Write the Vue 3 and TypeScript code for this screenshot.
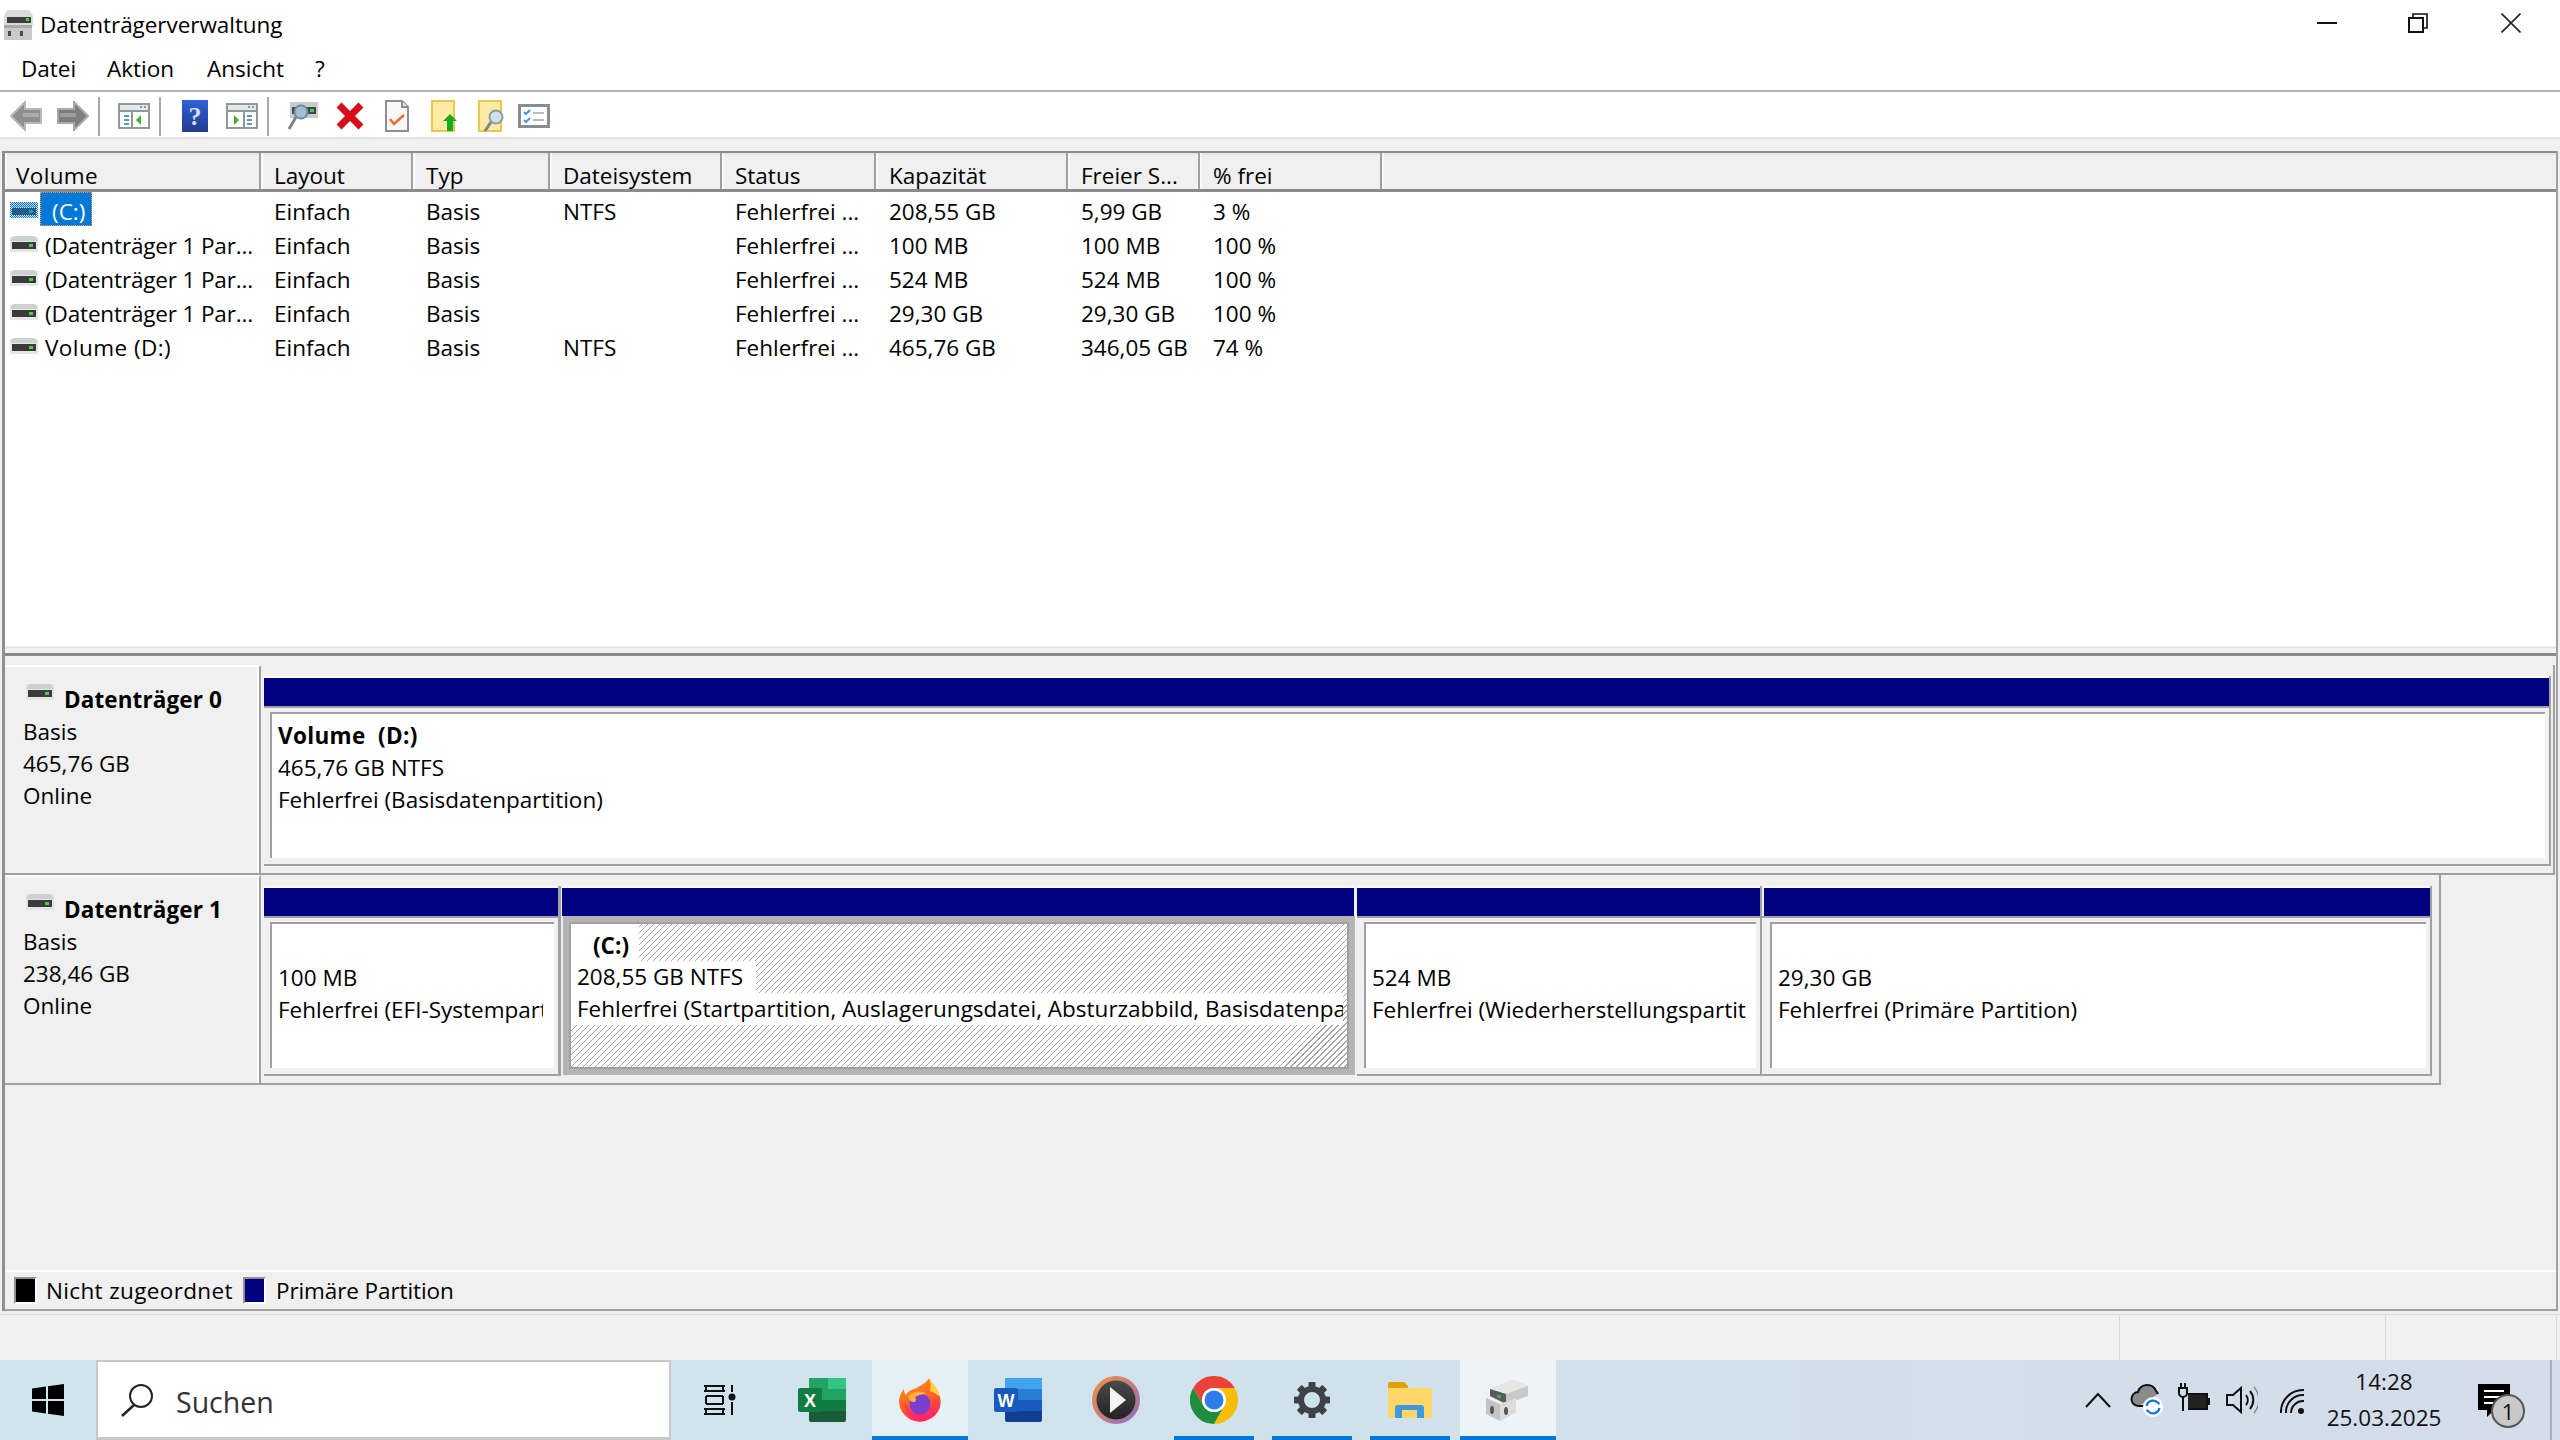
<script setup lang="ts">
interface Row { name: string; layout: string; typ: string; fs: string; status: string; cap: string; free: string; pct: string; sel?: boolean }

const columns: string[] = ['Volume', 'Layout', 'Typ', 'Dateisystem', 'Status', 'Kapazität', 'Freier S...', '% frei', '']

const rows: Row[] = [
  { name: '(C:)', layout: 'Einfach', typ: 'Basis', fs: 'NTFS', status: 'Fehlerfrei ...', cap: '208,55 GB', free: '5,99 GB', pct: '3 %', sel: true },
  { name: '(Datenträger 1 Par...', layout: 'Einfach', typ: 'Basis', fs: '', status: 'Fehlerfrei ...', cap: '100 MB', free: '100 MB', pct: '100 %' },
  { name: '(Datenträger 1 Par...', layout: 'Einfach', typ: 'Basis', fs: '', status: 'Fehlerfrei ...', cap: '524 MB', free: '524 MB', pct: '100 %' },
  { name: '(Datenträger 1 Par...', layout: 'Einfach', typ: 'Basis', fs: '', status: 'Fehlerfrei ...', cap: '29,30 GB', free: '29,30 GB', pct: '100 %' },
  { name: 'Volume (D:)', layout: 'Einfach', typ: 'Basis', fs: 'NTFS', status: 'Fehlerfrei ...', cap: '465,76 GB', free: '346,05 GB', pct: '74 %' }
]

const gearTeeth: number[] = [0, 45, 90, 135, 180, 225, 270, 315]
</script>

<template>
  <div class="app">
    <svg class="defs" width="0" height="0" aria-hidden="true">
      <defs>
        <linearGradient id="ffg" x1="0.2" y1="0" x2="0.6" y2="1">
          <stop offset="0" stop-color="#ff9a0e" />
          <stop offset="0.6" stop-color="#ff5a2a" />
          <stop offset="1" stop-color="#ff1f6a" />
        </linearGradient>
        <symbol id="drive" viewBox="0 0 28 16">
          <rect x="0" y="1" width="28" height="15" fill="#e4e6e6" />
          <polygon points="3,0 25,0 28,5 0,5" fill="#cdd1d1" />
          <rect x="2" y="6" width="24" height="7" fill="#3a3a3a" />
          <rect x="19" y="8" width="4" height="3" fill="#3fd14a" />
        </symbol>
        <symbol id="mgmt" viewBox="0 0 44 41">
          <polygon points="4,9 27,0 42,6 42,16 20,24 4,16" fill="#c8c8c8" />
          <polygon points="27,0 42,6 20,14 4,9" fill="#e6e6e6" />
          <polygon points="4,9 20,14 20,24 4,16" fill="#5a5a5a" />
          <rect x="11" y="15" width="4" height="3" fill="#2fb34a" />
          <polygon points="0,18 14,24 30,18 30,32 14,41 0,34" fill="#c4c4c4" />
          <polygon points="14,24 30,18 30,32 14,41" fill="#dcdcdc" />
          <ellipse cx="6" cy="30" rx="2" ry="4" fill="#555" />
          <ellipse cx="20" cy="31" rx="2" ry="4" fill="#555" />
        </symbol>
        <symbol id="winpane" viewBox="0 0 32 26">
          <rect x="1" y="1" width="30" height="24" fill="#fff" stroke="#90989c" stroke-width="2" />
          <rect x="2" y="2" width="28" height="5" fill="#e4e8ea" />
          <rect x="2" y="7" width="28" height="2" fill="#90989c" />
          <rect x="22" y="3" width="2" height="2" fill="#90989c" />
          <rect x="26" y="3" width="2" height="2" fill="#90989c" />
        </symbol>
        <symbol id="ff" viewBox="0 0 42 44">
          <path d="M30 0c2 6 8 9 10 16 2 5 2 9 1 13A21 21 0 0 1 0 24C0 18 3 13 5 11c0 3 1 5 2 6 3-6 8-5 12-8 5-3 9-5 11-9Z" fill="url(#ffg)" />
          <path d="M30 0c3 5 9 10 11 19-3-3-7-5-10-6 1-4 1-9-1-13Z" fill="#ffd43a" />
          <circle cx="21" cy="26" r="10.500" fill="#7a3fcf" />
          <path d="M9 18c5-5 13-6 19-2-4 0-9 1-12 3 2 3 1 5-2 5-2 0-4-2-5-6Z" fill="#ffb03a" />
          <path d="M6 22c1 9 8 15 17 14 6-1 10-5 11-10 1 11-8 17-16 16C11 41 5 32 6 22Z" fill="#ff2a6a" />
        </symbol>
      </defs>
    </svg>

    <header class="titlebar">
      <svg class="title-icon" width="31" height="30" viewBox="0 0 31 30">
        <polygon points="5,0 27,0 31,6 31,15 2,15 2,6" fill="#dadcdc" />
        <rect x="5" y="7" width="24" height="6" fill="#3e3e3e" />
        <rect x="24" y="8" width="3" height="3" fill="#3fd14a" />
        <rect x="2" y="15" width="28" height="15" fill="#c9c9c9" />
        <rect x="2" y="15" width="28" height="3" fill="#a8a8a8" />
        <rect x="6" y="21" width="3" height="5" fill="#4a4a4a" />
        <rect x="18" y="21" width="3" height="5" fill="#4a4a4a" />
      </svg>
      <span class="title">Datenträgerverwaltung</span>
      <div class="wincontrols">
        <svg width="20" height="4" class="wc-min"><rect width="20" height="2" y="1" fill="#111" /></svg>
        <svg width="20" height="20" class="wc-max" viewBox="0 0 20 20">
          <path d="M5 4V1h14v14h-4" fill="none" stroke="#111" stroke-width="1.600" />
          <rect x="1" y="5" width="14" height="14" fill="#fff" stroke="#111" stroke-width="2" />
        </svg>
        <svg width="20" height="20" class="wc-close" viewBox="0 0 20 20">
          <path d="M.5.5l19 19M19.500.5l-19 19" stroke="#222" stroke-width="1.600" />
        </svg>
      </div>
    </header>

    <nav class="menubar">
      <span class="m1">Datei</span>
      <span class="m2">Aktion</span>
      <span class="m3">Ansicht</span>
      <span>?</span>
    </nav>

    <div class="toolbar">
      <div class="tool">
        <svg width="32" height="30" viewBox="0 0 32 30">
          <path d="M1 15L15 1v7h16v14H15v7Z" fill="#8f8f8f" stroke="#b8b8b8" stroke-width="2" />
          <path d="M13 12h16v4H13z" fill="#ababab" />
        </svg>
      </div>
      <div class="tool">
        <svg width="32" height="30" viewBox="0 0 32 30">
          <path d="M31 15L17 1v7H1v14h16v7Z" fill="#7e7e7e" stroke="#ababab" stroke-width="2" />
          <path d="M3 12h16v4H3z" fill="#9e9e9e" />
        </svg>
      </div>
      <span class="sep"></span>
      <div class="tool">
        <svg width="32" height="26" viewBox="0 0 32 26">
          <use href="#winpane" />
          <rect x="6" y="12" width="5" height="2" fill="#5f95c8" /><rect x="6" y="16" width="5" height="2" fill="#5f95c8" /><rect x="6" y="20" width="5" height="2" fill="#5f95c8" />
          <rect x="13" y="9" width="2" height="15" fill="#90989c" />
          <path d="M18 17l5-5v10Z" fill="#45b02f" />
        </svg>
      </div>
      <span class="sep"></span>
      <div class="tool">
        <svg width="26" height="32" viewBox="0 0 26 32">
          <defs>
            <linearGradient id="hg" x1="0" y1="0" x2="0" y2="1"><stop offset="0" stop-color="#2a63d8" /><stop offset="1" stop-color="#233a8e" /></linearGradient>
          </defs>
          <rect width="26" height="32" fill="url(#hg)" />
          <text x="13" y="25" text-anchor="middle" class="help-q">?</text>
        </svg>
      </div>
      <div class="tool">
        <svg width="32" height="26" viewBox="0 0 32 26">
          <use href="#winpane" />
          <rect x="21" y="12" width="5" height="2" fill="#5f95c8" /><rect x="21" y="16" width="5" height="2" fill="#5f95c8" /><rect x="21" y="20" width="5" height="2" fill="#5f95c8" />
          <rect x="17" y="9" width="2" height="15" fill="#90989c" />
          <path d="M8 12l5 5-5 5Z" fill="#45b02f" />
        </svg>
      </div>
      <span class="sep"></span>
      <div class="tool">
        <svg width="30" height="28" viewBox="0 0 30 28">
          <rect x="2" y="0" width="28" height="16" fill="#c8cccc" />
          <rect x="4" y="5" width="24" height="7" fill="#444" />
          <rect x="22" y="7" width="4" height="3" fill="#3fd14a" />
          <circle cx="13" cy="10" r="6.500" fill="#9cc0d8" stroke="#7a8a94" stroke-width="2" />
          <path d="M8 15L1 27" stroke="#7d8488" stroke-width="3" />
        </svg>
      </div>
      <div class="tool">
        <svg width="28" height="28" viewBox="0 0 28 28">
          <path d="M3 3l22 22M25 3L3 25" stroke="#d60d1c" stroke-width="7" />
        </svg>
      </div>
      <div class="tool">
        <svg width="24" height="32" viewBox="0 0 24 32">
          <path d="M1 1h16l6 6v24H1Z" fill="#f8f8f8" stroke="#8e8e8e" stroke-width="2" />
          <path d="M17 1v6h6" fill="#e4e4e4" stroke="#8e8e8e" stroke-width="2" />
          <path d="M5 19l4 5 10-9" fill="none" stroke="#ef6a32" stroke-width="2.500" />
        </svg>
      </div>
      <div class="tool">
        <svg width="26" height="32" viewBox="0 0 26 32">
          <rect x="1" y="1" width="22" height="30" fill="#ffeaa6" stroke="#e8c84e" stroke-width="2" />
          <path d="M12 21l7-7 7 7h-4v10h-6V21Z" fill="#12ac1c" />
        </svg>
      </div>
      <div class="tool">
        <svg width="26" height="32" viewBox="0 0 26 32">
          <rect x="1" y="1" width="22" height="30" fill="#ffeaa6" stroke="#e8c84e" stroke-width="2" />
          <circle cx="18" cy="17" r="6.500" fill="#cfe2ea" stroke="#8d9aa2" stroke-width="2" />
          <path d="M13 22l-6 9" stroke="#7d8488" stroke-width="3" />
        </svg>
      </div>
      <div class="tool last">
        <svg width="32" height="24" viewBox="0 0 32 24">
          <rect x="1.500" y="1.500" width="29" height="21" fill="#fff" stroke="#878d92" stroke-width="3" />
          <path d="M6 8l2 2 4-4M6 16l2 2 4-4" fill="none" stroke="#3c9ae8" stroke-width="2" />
          <rect x="15" y="8" width="11" height="2" fill="#bbb" /><rect x="15" y="15" width="11" height="2" fill="#bbb" />
        </svg>
      </div>
    </div>

    <main class="console">
      <section class="list">
        <div class="cols head">
          <div v-for="(c, i) in columns" :key="i" class="hcell">{{ c }}</div>
        </div>
        <div class="list-body">
          <div v-for="(r, i) in rows" :key="i" class="cols row">
            <div class="cell vol">
              <svg width="28" height="16" class="drive-icon">
                <use href="#drive" />
                <template v-if="r.sel">
                  <defs>
                    <pattern id="dith" width="2" height="2" patternUnits="userSpaceOnUse">
                      <rect width="1" height="1" fill="#0078d7" /><rect x="1" y="1" width="1" height="1" fill="#0078d7" />
                    </pattern>
                  </defs>
                  <rect width="28" height="16" fill="url(#dith)" />
                </template>
              </svg>
              <span v-if="r.sel" class="sel">{{ r.name }}</span>
              <span v-else class="vname" :class="{ wide: r.name.length < 12 }">{{ r.name }}</span>
            </div>
            <div class="cell">{{ r.layout }}</div>
            <div class="cell">{{ r.typ }}</div>
            <div class="cell">{{ r.fs }}</div>
            <div class="cell">{{ r.status }}</div>
            <div class="cell">{{ r.cap }}</div>
            <div class="cell">{{ r.free }}</div>
            <div class="cell">{{ r.pct }}</div>
          </div>
        </div>
        <div class="list-foot"></div>
      </section>

      <section class="lower">
        <div class="disk">
          <div class="label">
            <div class="label-title">
              <svg width="28" height="16"><use href="#drive" /></svg>
              <b>Datenträger 0</b>
            </div>
            <div class="label-line">Basis</div>
            <div class="label-line">465,76 GB</div>
            <div class="label-line">Online</div>
          </div>
          <div class="frame full">
            <div class="part whole">
              <div class="bar"></div>
              <div class="body">
                <div class="box">
                  <div class="line"><b class="dname">Volume&nbsp; (D:)</b></div>
                  <div class="line">465,76 GB NTFS</div>
                  <div class="line">Fehlerfrei (Basisdatenpartition)</div>
                </div>
              </div>
            </div>
          </div>
        </div>

        <div class="disk">
          <div class="label">
            <div class="label-title">
              <svg width="28" height="16"><use href="#drive" /></svg>
              <b>Datenträger 1</b>
            </div>
            <div class="label-line">Basis</div>
            <div class="label-line">238,46 GB</div>
            <div class="label-line">Online</div>
          </div>
          <div class="frame">
            <div class="part p1">
              <div class="bar"></div>
              <div class="body">
                <div class="box clip efi">
                  <div class="line">&nbsp;</div>
                  <div class="line">100 MB</div>
                  <div class="line">Fehlerfrei (EFI-Systempartition)</div>
                </div>
              </div>
            </div>
            <div class="part pc">
              <div class="bar"></div>
              <div class="cbody">
                <div class="hatch">
                  <div class="cl1"><b>(C:)</b></div>
                  <div class="cl2">208,55 GB NTFS</div>
                  <div class="cl3">Fehlerfrei (Startpartition, Auslagerungsdatei, Absturzabbild, Basisdatenpartition)</div>
                </div>
              </div>
            </div>
            <div class="part p3">
              <div class="bar"></div>
              <div class="body">
                <div class="box clip">
                  <div class="line">&nbsp;</div>
                  <div class="line">524 MB</div>
                  <div class="line">Fehlerfrei (Wiederherstellungspartition)</div>
                </div>
              </div>
            </div>
            <div class="part p4">
              <div class="bar"></div>
              <div class="body">
                <div class="box">
                  <div class="line">&nbsp;</div>
                  <div class="line">29,30 GB</div>
                  <div class="line">Fehlerfrei (Primäre Partition)</div>
                </div>
              </div>
            </div>
          </div>
        </div>
      </section>

      <footer class="legend">
        <span class="swatch black"></span>
        <span class="lg1">Nicht zugeordnet</span>
        <span class="swatch navy"></span>
        <span class="lg2">Primäre Partition</span>
      </footer>
    </main>

    <div class="statusbar">
      <span class="st st1"></span>
      <span class="st st2"></span>
      <span class="st st3"></span>
    </div>

    <div class="taskbar">
      <div class="start">
        <svg width="32" height="32" viewBox="0 0 32 32">
          <path d="M0 4.500l14-2V15H0ZM16 2.200L32 0v15H16ZM0 17h14v12.500l-14-2ZM16 17h16v15l-16-2.200Z" fill="#000" />
        </svg>
      </div>
      <div class="search">
        <svg width="34" height="34" viewBox="0 0 34 34">
          <circle cx="21" cy="13" r="11" fill="none" stroke="#222" stroke-width="2" />
          <path d="M14 22L2 33" stroke="#222" stroke-width="2.400" />
        </svg>
        <span class="search-text">Suchen</span>
      </div>
      <div class="tb-btn taskview">
        <svg width="32" height="30" viewBox="0 0 32 30">
          <path d="M0 1h21M0 6h21M2 11v8M19 11v8M2 11h17M2 19h17M0 24h21M0 29h21M2 24v5M19 24v5M2 1v5M19 1v5M28 0v7M28 17v13" fill="none" stroke="#111" stroke-width="2" />
          <circle cx="28" cy="12" r="3.500" fill="#111" />
        </svg>
      </div>
      <div class="apps">
        <div class="tb-btn">
          <svg width="48" height="44" viewBox="0 0 48 44">
            <rect x="11" y="0" width="37" height="44" rx="2" fill="#185c37" />
            <rect x="11" y="0" width="37" height="11" fill="#21a366" /><rect x="30" y="0" width="18" height="11" fill="#33c481" />
            <rect x="11" y="11" width="37" height="11" fill="#21a366" />
            <rect x="11" y="22" width="37" height="11" fill="#107c41" />
            <rect x="0" y="10" width="24" height="24" rx="2" fill="#107c41" />
            <text x="12" y="29" text-anchor="middle" class="app-letter">X</text>
          </svg>
        </div>
        <div class="tb-btn active">
          <svg width="42" height="44"><use href="#ff" /></svg>
        </div>
        <div class="tb-btn">
          <svg width="48" height="44" viewBox="0 0 48 44">
            <rect x="11" y="0" width="37" height="44" rx="2" fill="#103f91" />
            <rect x="11" y="0" width="37" height="11" fill="#41a5ee" />
            <rect x="11" y="11" width="37" height="11" fill="#2b7cd3" />
            <rect x="11" y="22" width="37" height="11" fill="#185abd" />
            <rect x="0" y="10" width="24" height="24" rx="2" fill="#185abd" />
            <text x="12" y="29" text-anchor="middle" class="app-letter">W</text>
          </svg>
        </div>
        <div class="tb-btn">
          <svg width="48" height="48" viewBox="0 0 48 48">
            <defs>
              <linearGradient id="pg" x1="0" y1="0" x2="1" y2="1"><stop offset="0" stop-color="#f8903c" /><stop offset="1" stop-color="#8e6cc8" /></linearGradient>
              <linearGradient id="pd" x1="0" y1="0" x2="0" y2="1"><stop offset="0" stop-color="#4a4a4a" /><stop offset="1" stop-color="#222" /></linearGradient>
            </defs>
            <circle cx="24" cy="24" r="24" fill="url(#pg)" />
            <circle cx="24" cy="24" r="19.500" fill="url(#pd)" />
            <path d="M18 11l16 13-16 13Z" fill="#f4f4f4" />
          </svg>
        </div>
        <div class="tb-btn running">
          <svg width="48" height="48" viewBox="0 0 48 48">
            <path d="M3.200 12A24 24 0 0 1 44.780 12H24A12 12 0 0 0 13.600 30Z" fill="#ea4335" />
            <path d="M13.600 30L3.200 12A24 24 0 0 0 24 48L34.400 30A12 12 0 0 1 13.600 30Z" fill="#1e8e3e" />
            <path d="M44.780 12H24A12 12 0 0 1 34.400 30L24 48A24 24 0 0 0 44.780 12Z" fill="#fbbc04" />
            <circle cx="24" cy="24" r="12" fill="#fff" />
            <circle cx="24" cy="24" r="9.500" fill="#2f7de8" />
          </svg>
        </div>
        <div class="tb-btn running">
          <svg width="36" height="36" viewBox="-18 -18 36 36">
            <rect v-for="a in gearTeeth" :key="a" x="-3.500" y="-18" width="7" height="8" rx="1" fill="#3c4248" :transform="`rotate(${a})`" />
            <circle r="11" fill="none" stroke="#3c4248" stroke-width="6" />
          </svg>
        </div>
        <div class="tb-btn running">
          <svg width="44" height="36" viewBox="0 0 44 36">
            <path d="M0 2a2 2 0 0 1 2-2h14l4 4v6H0Z" fill="#e0a008" />
            <path d="M0 6h42a2 2 0 0 1 2 2v26a2 2 0 0 1-2 2H2a2 2 0 0 1-2-2Z" fill="#ffd768" />
            <path d="M7 36V26a3 3 0 0 1 3-3h23a3 3 0 0 1 3 3v10h-7V28H14v8Z" fill="#3d9ae0" />
          </svg>
        </div>
        <div class="tb-btn active">
          <svg width="44" height="41"><use href="#mgmt" /></svg>
        </div>
      </div>

      <div class="tray">
        <svg class="t-chev" width="26" height="40" viewBox="0 0 26 40"><path d="M1 27l12-13 12 13" fill="none" stroke="#111" stroke-width="2" /></svg>
        <svg class="t-cloud" width="34" height="40" viewBox="0 0 34 40">
          <path d="M9 26a7 7 0 0 1-1-14 9.500 9.500 0 0 1 18-1 8 8 0 0 1 2 3" fill="#8a8a8a" stroke="#111" stroke-width="2" />
          <path d="M9 26h8" stroke="#111" stroke-width="2" />
          <circle cx="23" cy="27" r="10" fill="#fff" />
          <path d="M16.500 26a6.500 6.500 0 0 1 11-3.500l2 1.500M29.500 28a6.500 6.500 0 0 1-11 3.500l-2-1.500" fill="none" stroke="#1a78d0" stroke-width="2.200" />
        </svg>
        <svg class="t-batt" width="32" height="40" viewBox="0 0 32 40">
          <path d="M3 8V3M7 8V3M1 8h8v5a4 4 0 0 1-8 0ZM5 17v14" fill="none" stroke="#111" stroke-width="2" />
          <path d="M10 14h19v15H10" fill="#222" stroke="#111" stroke-width="2" />
          <rect x="30" y="18" width="2" height="7" fill="#111" />
        </svg>
        <svg class="t-vol" width="32" height="40" viewBox="0 0 32 40">
          <path d="M1 15h6l8-7v24l-8-7H1Z" fill="none" stroke="#111" stroke-width="2" />
          <path d="M20 15a8 8 0 0 1 0 10M24 11a14 14 0 0 1 0 18" fill="none" stroke="#111" stroke-width="2" />
          <path d="M28 7a20 20 0 0 1 0 26" fill="none" stroke="#888" stroke-width="1.500" />
        </svg>
        <svg class="t-wifi" width="24" height="40" viewBox="0 0 24 40">
          <path d="M1 33A22 22 0 0 1 24 10M6 33A17 17 0 0 1 24 15M11 33A12 12 0 0 1 24 21" fill="none" stroke="#111" stroke-width="2" />
          <circle cx="21" cy="31" r="3" fill="#111" />
        </svg>
        <div class="clock">
          <span>14:28</span>
          <span>25.03.2025</span>
        </div>
        <div class="notif">
          <svg width="32" height="40" viewBox="0 0 32 40">
            <path d="M0 4h32v26H16l-7 7v-7H0Z" fill="#000" />
            <path d="M6 11h20M6 17h20M6 23h14" stroke="#fff" stroke-width="2" />
          </svg>
          <span class="badge">1</span>
        </div>
        <span class="edge"></span>
      </div>
    </div>
  </div>
</template>

<style>
html, body { margin: 0; padding: 0; overflow: hidden; background: #f0f0f0; }
</style>

<style scoped>
.app {
  width: 2560px;
  height: 1440px;
  display: flex;
  flex-direction: column;
  background: #f0f0f0;
  color: #000;
  font-family: "Open Sans", "Noto Sans", sans-serif;
  font-size: 22.5px;
  overflow: hidden;
  position: relative;
}
.defs { position: absolute; }
.titlebar { height: 50px; background: #fff; display: flex; align-items: center; flex: none; }
.title-icon { margin-left: 2px; margin-right: 7px; }
.title { letter-spacing: -.05px; padding-bottom: 2px; }
.wincontrols { margin-left: auto; display: flex; align-items: center; height: 50px; padding-bottom: 4px; box-sizing: border-box; }
.wc-min { margin-right: 71px; }
.wc-max { margin-right: 73px; }
.wc-close { margin-right: 39px; }

.menubar { height: 40px; flex: none; box-sizing: content-box; background: #fff; border-bottom: 2px solid #b4b4b4; display: flex; align-items: center; padding: 0 0 0 21px; }
.menubar span { width: 86px; flex: none; padding-bottom: 3px; }
.menubar .m2 { width: 100px; }
.menubar .m3 { width: 108px; }

.toolbar { flex: none; background: #fff; border-bottom: 2px solid #e2e2e2; display: flex; align-items: center; padding: 3px 0 0 2px; height: 42px; }
.tool { width: 47px; display: flex; justify-content: center; flex: none; }
.tool.last { width: 40px; }
.sep { width: 2px; height: 39px; background: #a8a8a8; margin: 0 10px 0 2px; flex: none; }
.help-q { font: bold 26px "Liberation Serif", serif; fill: #d8dcea; }
.app-letter { font: bold 18px "Liberation Sans", sans-serif; fill: #fff; }

.console {
  margin: 12px 2px 0 2px;
  height: 1160px;
  flex: none;
  box-sizing: border-box;
  display: flex;
  flex-direction: column;
  border-left: 3px solid #8f8f8f;
  border-right: 2px solid #a0a0a0;
}
.list { height: 505px; flex: none; box-sizing: border-box; border-top: 2px solid #8a8a8a; border-bottom: 3px solid #8a8a8a; display: flex; flex-direction: column; background: #f0f0f0; }
.cols { display: grid; grid-template-columns: 256px 152px 137px 172px 154px 192px 132px 182px 1fr; }
.head { height: 39px; flex: none; box-sizing: border-box; border-bottom: 3px solid #8a8a8a; }
.hcell {
  box-sizing: border-box;
  border-left: 2px solid #fafafa;
  border-right: 2px solid #a0a0a0;
  box-shadow: inset 0 2px 0 #e4e4e4;
  padding: 9px 0 0 11px;
  line-height: 27px;
  white-space: nowrap;
}
.hcell:first-child { padding-left: 9px; letter-spacing: .35px; }
.hcell:last-child { border-right: none; }
.list-body { flex: 1; background: #fff; padding-top: 3px; }
.row { height: 34px; line-height: 34px; }
.cell { padding-left: 13px; white-space: nowrap; }
.cell.vol { padding-left: 5px; display: flex; align-items: center; }
.drive-icon { flex: none; margin-top: -4px; }
.vname { margin-left: 7px; letter-spacing: -.15px; }
.vname.wide { letter-spacing: .45px; }
.sel {
  margin-left: 2px;
  width: 52px;
  height: 34px;
  box-sizing: border-box;
  padding-left: 12px;
  line-height: 40px;
  background: #0078d7;
  color: #fff;
  margin-top: -6px;
  outline: 1px dotted #e09a50;
  outline-offset: -1px;
}
.list-foot { height: 9px; flex: none; box-sizing: border-box; border-top: 2px solid #fff; background: linear-gradient(#f0f0f0 1px, #e0e0e0 1px, #e0e0e0 2px, #f0f0f0 2px); }

.lower { flex: 1; background: #f0f0f0; padding-top: 9px; }
.disk { display: flex; height: 210px; }
.label { width: 256px; flex: none; box-sizing: border-box; padding: 17px 0 0 18px; border-top: 2px solid #fff; border-right: 2px solid #a0a0a0; box-shadow: inset -2px 0 0 #fff; border-bottom: 2px solid #a0a0a0; }
.label-title { display: flex; height: 32px; line-height: 32px; margin-left: 3px; letter-spacing: .1px; }
.label-title svg { margin-right: 10px; flex: none; }
.label-line { height: 32px; line-height: 32px; }
.frame { display: flex; box-sizing: border-box; padding: 11px 7px 7px 3px; border-bottom: 2px solid #a0a0a0; border-right: 2px solid #a0a0a0; height: 210px; }
.frame.full { flex: 1; margin-right: 1px; padding-right: 2px; }
.part { display: flex; flex-direction: column; flex: none; box-sizing: border-box; }
.whole { flex: 1; border-right: 2px solid #a0a0a0; }
.p1 { width: 297px; border-right: 3px solid #a0a0a0; }
.pc { width: 796px; }
.p3 { width: 405px; border-right: 2px solid #a0a0a0; }
.p4 { width: 670px; border-right: 2px solid #a0a0a0; }
.bar { height: 30px; flex: none; box-sizing: border-box; border-top: 2px solid #fff; background: #000080; }
.pc .bar { margin: 0 3px 0 1px; }
.p4 .bar { margin-left: 2px; }
.body { flex: 1; box-sizing: border-box; border-top: 2px solid #a0a0a0; border-bottom: 2px solid #a0a0a0; padding: 4px 4px 6px 6px; display: flex; min-height: 0; min-width: 0; }
.p3 .body { padding-left: 7px; }
.p4 .body { padding-left: 8px; }
.box { flex: 1; min-width: 0; height: 146px; box-sizing: border-box; background: #fff; border-top: 2px solid #a0a0a0; border-left: 2px solid #a0a0a0; padding: 6px 6px 0 6px; overflow: hidden; }
.box.clip { padding-right: 9px; }
.box.efi { padding-right: 11px; }
.dname { letter-spacing: .35px; }
.line { height: 32px; line-height: 32px; white-space: nowrap; overflow: hidden; }
.cbody { margin: 0 2px 0 2px; box-sizing: border-box; border: 6px solid #b4b4b4; height: 159px; flex: none; }
.hatch {
  height: 147px;
  box-sizing: border-box;
  border: 2px solid #a0a0a0;
  overflow: hidden;
  background: repeating-linear-gradient(135deg, #fff 0, #fff 3.200px, #a8a8a8 3.200px, #a8a8a8 4.240px);
}
.cl1 { width: 68px; height: 37px; line-height: 44px; box-sizing: border-box; padding-left: 22px; background: #fff; overflow: hidden; }
.cl2 { width: 185px; height: 32px; line-height: 32px; padding-left: 6px; box-sizing: border-box; background: #fff; white-space: nowrap; }
.cl3 { height: 32px; line-height: 32px; margin-right: 4px; padding-left: 6px; background: #fff; white-space: nowrap; overflow: hidden; }

.legend { height: 41px; flex: none; box-sizing: border-box; border-top: 2px solid #fff; border-bottom: 2px solid #a0a0a0; display: flex; align-items: center; padding-left: 9px; }
.swatch { width: 23px; height: 27px; box-sizing: border-box; flex: none; border: 2px solid; border-color: #909090 #fff #fff #909090; margin-right: 9px; }
.black { background: #000; }
.navy { background: #000080; }
.lg1 { width: 197px; flex: none; white-space: nowrap; letter-spacing: .35px; }
.lg2 { letter-spacing: -.1px; margin-left: 1px; }

.statusbar { height: 49px; flex: none; box-sizing: border-box; position: relative; box-shadow: inset 0 3px 0 #f0f0f0, inset 0 4px 0 #dcdcdc; }
.st { display: block; position: absolute; top: 5px; bottom: 0; width: 1px; background: #d8d8d8; }
.st1 { left: 2119px; }
.st2 { left: 2385px; }
.st3 { left: 2556px; }

.taskbar { height: 80px; flex: none; display: flex; align-items: stretch; background: linear-gradient(90deg, #cfe5ee 0%, #d0e3ec 35%, #d1e1ec 55%, #d4dcea 100%); }
.start { width: 96px; flex: none; display: flex; align-items: center; justify-content: center; }
.search { width: 575px; flex: none; box-sizing: border-box; background: #fff; border: 2px solid #c8c8c8; border-bottom: 3px solid #c8c8c8; display: flex; align-items: center; padding-left: 22px; }
.search-text { font-size: 28.500px; margin-left: 22px; padding-top: 5px; color: #333; }
.tb-btn { width: 96px; flex: none; display: flex; align-items: center; justify-content: center; position: relative; box-sizing: border-box; }
.taskview { margin-left: 1px; }
.apps { display: flex; gap: 2px; margin-left: 6px; }
.active { background: #e4f0f6; }
.apps .tb-btn:last-child.active { background: #eef3f8; }
.active::after, .running::after { content: ""; position: absolute; bottom: 0; height: 4px; background: #0078d7; left: 0; right: 0; }
.running::after { left: 8px; right: 8px; }
.tray { margin-left: auto; display: flex; align-items: center; }
.t-chev { margin-right: 19px; }
.t-cloud { margin-right: 14px; }
.t-batt { margin-right: 16px; }
.t-vol { margin-right: 22px; }
.t-wifi { margin-right: 22px; }
.clock { width: 116px; display: flex; flex-direction: column; align-items: center; justify-content: center; font-size: 22.500px; line-height: 36px; color: #111; white-space: nowrap; }
.notif { margin-left: 36px; position: relative; width: 32px; height: 40px; }
.badge { position: absolute; left: 13px; top: 14px; width: 34px; height: 34px; box-sizing: border-box; border-radius: 50%; background: #c8c8c8; border: 2px solid #555; display: flex; align-items: center; justify-content: center; font-size: 22px; color: #111; }
.edge { width: 2px; height: 80px; background: #a8b0c0; margin-left: 40px; margin-right: 8px; }
</style>
